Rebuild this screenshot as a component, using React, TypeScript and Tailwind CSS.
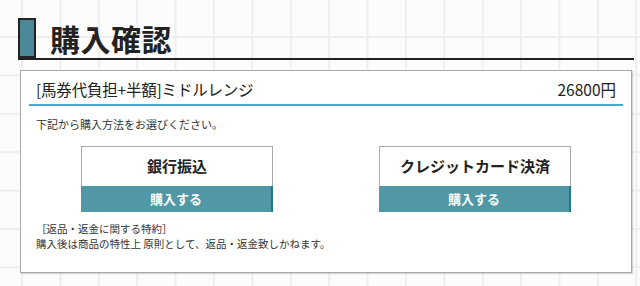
const jp = "font-['Helvetica_Neue','Noto_Sans_CJK_JP',sans-serif]";

type Method = { id: string; label: string };

const methods: Method[] = [
  { id: "bank", label: "銀行振込" },
  { id: "card", label: "クレジットカード決済" },
];

function MethodBox({ label }: { label: string }) {
  return (
    <div className="w-[192px]">
      <div className="h-[40px] flex items-center justify-center border border-b-0 border-[#aaaaaa] bg-white text-[15px] font-bold text-[#222]">
        {label}
      </div>
      <button className="w-full h-[26px] flex items-center justify-center bg-[#5098a6] border-r-2 border-[#237888] text-[13px] font-bold text-white">
        購入する
      </button>
    </div>
  );
}

export default function App() {
  return (
    <div
      className={`${jp} w-[640px] h-[286px] overflow-hidden bg-[#fcfcfc] bg-[linear-gradient(to_right,#eeeeee_2px,transparent_2px),linear-gradient(to_bottom,#eeeeee_2px,transparent_2px)] bg-[size:38.4px_38.4px] bg-[position:21px_36px] pl-[18px] pr-[6px] pt-[18px]`}
    >
      {/* HEADER */}
      <div className="flex items-end border-b-2 border-[#222]">
        <div className="w-[18px] h-[40px] border-2 border-[#222] bg-[#4b8898]" />
        <h1 className="ml-[14px] pb-[4px] text-[30px] leading-[32px] font-bold text-[#222] tracking-[0.5px]">
          購入確認
        </h1>
      </div>

      {/* PANEL */}
      <div className="mt-[10px] ml-[2px] w-[612px] h-[203px] border border-[#a8a8a8] bg-white shadow-[1px_1px_1px_rgba(0,0,0,0.15)]">
        <div className="mx-[8px] flex justify-between border-b-2 border-[#4aaac8] pl-[7px] pr-[7px] pt-[8px] pb-[5px] text-[15.5px] leading-[20px] text-[#222]">
          <span className="tracking-[-0.2px]">[馬券代負担+半額]ミドルレンジ</span>
          <span>26800円</span>
        </div>

        <p className="mt-[10px] pl-[15px] text-[11px] leading-[16px] text-[#333]">
          下記から購入方法をお選びください。
        </p>

        <div className="mt-[14px] flex justify-center gap-[106px]">
          {methods.map((m) => (
            <MethodBox key={m.id} label={m.label} />
          ))}
        </div>

        <div className="mt-[9px] pl-[15px] text-[10.5px] leading-[15px] text-[#333]">
          <p>［返品・返金に関する特約］</p>
          <p>購入後は商品の特性上 原則として、返品・返金致しかねます。</p>
        </div>
      </div>
    </div>
  );
}
